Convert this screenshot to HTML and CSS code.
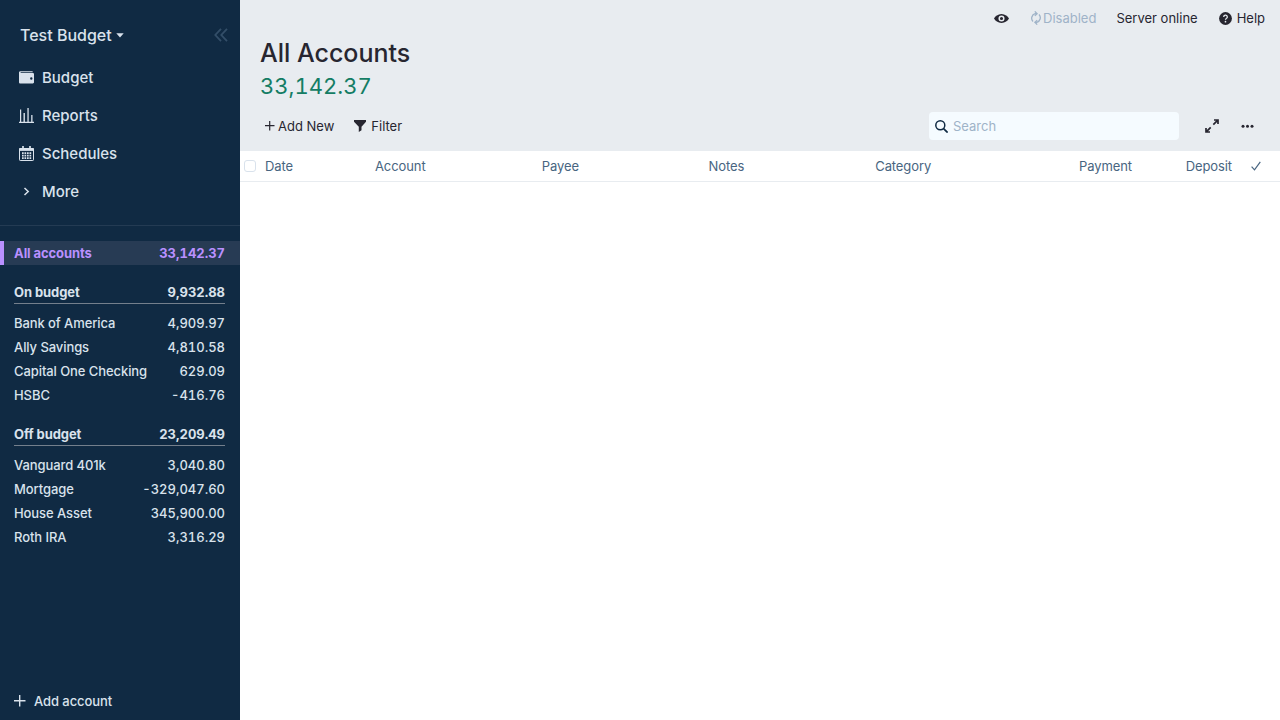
FILE: index.html
```html
<!DOCTYPE html>
<html lang="en">
<head>
    <meta charset="UTF-8">
    <meta name="viewport" content="width=device-width, initial-scale=1.0">
    <title>All Accounts</title>
    <link rel="stylesheet" href="styles.css">
</head>
<body>

<div class="app">
    <aside class="sidebar">
        <div class="budget-name">
            <span>Test Budget</span>
            <svg class="caret" width="8" height="5" viewBox="0 0 8 5"><path d="M.3.3h7.400L4 4.600z" fill="currentColor"/></svg>
            <svg class="collapse" width="14" height="14" viewBox="0 0 14 14" fill="none" stroke="currentColor" stroke-width="1.800"><path d="M7 .8L1.300 7 7 13.200M13 .8L7.300 7l5.700 6.200"/></svg>
        </div>

        <nav class="nav">
            <a class="nav-item">
                <svg width="15" height="15" viewBox="0 0 15 15" fill="currentColor"><path d="M1.4 1.2h11.8c.4 0 .6.3.6.6v.5H1.9c-.5 0-.5.7 0 .7h11.9c.7 0 1.2.5 1.2 1.2v8.1c0 .7-.5 1.2-1.2 1.2H1.4C.6 13.5 0 12.9 0 12.2V2.6c0-.8.6-1.4 1.4-1.4zM12.300 7.300a1.200 1.200 0 1 0 0 2.400 1.200 1.200 0 0 0 0-2.400z"/></svg>
                Budget
            </a>
            <a class="nav-item">
                <svg width="15" height="15" viewBox="0 0 15 15" fill="currentColor"><path d="M0 13.800h15V15H0zM1 1.500h1.200V14H1zM4.500 5h1.400v9H4.500zM8.400 0h1.300v14H8.400zM12.200 7h1.300v7h-1.300z"/></svg>
                Reports
            </a>
            <a class="nav-item">
                <svg width="15" height="15" viewBox="0 0 15 15" fill="none" stroke="currentColor"><path d="M.5 2.500h14v11.300a.7.7 0 0 1-.7.7H1.200a.7.7 0 0 1-.7-.7z"/><path d="M.5 3.600h14" stroke-width="2.600"/><path d="M4 0v3M11 0v3" stroke-width="1.700"/><path d="M3 7.200h9.300M3 9.700h9.300M3 12.100h9.300" stroke-width="1.700" stroke-dasharray="1.700 .8"/></svg>
                Schedules
            </a>
            <a class="nav-item">
                <svg width="15" height="15" viewBox="0 0 15 15" fill="none" stroke="currentColor" stroke-width="1.500"><path d="M5.500 4l3.700 3.500L5.500 11"/></svg>
                More
            </a>
        </nav>

        <div class="accounts">
            <div class="account selected"><span>All accounts</span><span class="amount">33,142.37</span></div>

            <div class="account group"><span>On budget</span><span class="amount">9,932.88</span></div>
            <div class="account"><span>Bank of America</span><span class="amount">4,909.97</span></div>
            <div class="account"><span>Ally Savings</span><span class="amount">4,810.58</span></div>
            <div class="account"><span>Capital One Checking</span><span class="amount">629.09</span></div>
            <div class="account"><span>HSBC</span><span class="amount">-416.76</span></div>

            <div class="account group"><span>Off budget</span><span class="amount">23,209.49</span></div>
            <div class="account"><span>Vanguard 401k</span><span class="amount">3,040.80</span></div>
            <div class="account"><span>Mortgage</span><span class="amount">-329,047.60</span></div>
            <div class="account"><span>House Asset</span><span class="amount">345,900.00</span></div>
            <div class="account"><span>Roth IRA</span><span class="amount">3,316.29</span></div>
        </div>

        <div class="add-account">
            <svg width="12" height="12" viewBox="0 0 12 12" stroke="currentColor" stroke-width="1.400"><path d="M5.700 0v11.500M0 5.700h11.500"/></svg>
            Add account
        </div>
    </aside>

    <main class="content">
        <div class="titlebar">
            <svg class="eye" width="15" height="15" viewBox="0 0 15 15"><path d="M7.500 3C3.900 3 1.300 5.300 0 7.500 1.300 9.700 3.900 12 7.500 12s6.200-2.300 7.500-4.500C13.700 5.300 11.100 3 7.500 3z" fill="currentColor"/><circle cx="7.500" cy="7.500" r="2.300" fill="none" stroke="#e8ecf0" stroke-width="1.500"/></svg>
            <span class="sync">
                <svg width="13" height="14" viewBox="0 0 13 14" fill="none" stroke="currentColor" stroke-width="1.300"><path d="M3 10.500A4.700 4.700 0 0 1 5.200 2.700H7M9 3.500a4.700 4.700 0 0 1-2.200 7.800H5M4.800.4l2.300 2.300-2.300 2.200M7.200 9.100l-2.300 2.200 2.300 2.300"/></svg>
                Disabled
            </span>
            <span class="server">Server online</span>
            <span class="help">
                <svg width="13" height="13" viewBox="0 0 13 13"><circle cx="6.500" cy="6.500" r="6.400" fill="currentColor"/><path d="M4.700 5a1.800 1.800 0 1 1 2.700 1.500c-.6.300-.9.600-.9 1.300" fill="none" stroke="#e8ecf0" stroke-width="1.300"/><circle cx="6.500" cy="9.700" r=".85" fill="#e8ecf0"/></svg>
                Help
            </span>
        </div>

        <header class="account-header">
            <h1>All Accounts</h1>
            <div class="balance">33,142.37</div>
        </header>

        <div class="toolbar">
            <span class="tool add-new">
                <svg width="10" height="10" viewBox="0 0 10 10" stroke="currentColor" stroke-width="1.200"><path d="M4.700 0v9.500M0 4.700h9.500"/></svg>
                Add New
            </span>
            <span class="tool filter">
                <svg width="12" height="12" viewBox="0 0 12 12" fill="currentColor"><path d="M0 0h12v1.700L7.500 6.800v3.500L4.800 12V6.800L0 1.700z"/></svg>
                Filter
            </span>
            <label class="search">
                <svg width="13" height="13" viewBox="0 0 13 13" fill="none" stroke="currentColor" stroke-width="1.500"><circle cx="5.300" cy="5.300" r="4.500"/><path d="M8.600 8.600l4 4" stroke-width="1.700"/></svg>
                <input type="text" placeholder="Search">
            </label>
            <svg class="expand" width="14" height="14" viewBox="0 0 14 14" fill="none" stroke="currentColor" stroke-width="1.700"><path d="M9 1h4v4M5 13H1V9M12.800 1.200L8.300 5.700M1.200 12.800l4.500-4.500"/></svg>
            <svg class="dots" width="13" height="4" viewBox="0 0 13 4" fill="currentColor"><circle cx="2" cy="2.200" r="1.500"/><circle cx="6.500" cy="2.200" r="1.500"/><circle cx="11" cy="2.200" r="1.500"/></svg>
        </div>

        <div class="table-header">
            <span class="checkbox"></span>
            <span>Date</span>
            <span>Account</span>
            <span>Payee</span>
            <span>Notes</span>
            <span>Category</span>
            <span class="right">Payment</span>
            <span class="right">Deposit</span>
            <svg class="cleared" width="10" height="10" viewBox="0 0 10 10" fill="none" stroke="currentColor" stroke-width="1.200"><path d="M.6 5.700l2.900 3.200L9.300.8"/></svg>
        </div>
    </main>
</div>

</body>
</html>
```
FILE: styles.css
```css
* {
    box-sizing: border-box;
}

body {
    margin: 0;
    font-family: Inter, sans-serif;
    font-size: 13px;
    color: #272630;
}

svg {
    display: block;
    flex-shrink: 0;
}

.app {
    display: flex;
    height: 100vh;
}

/* Sidebar */
.sidebar {
    display: flex;
    flex-direction: column;
    width: 240px;
    background-color: #102a43;
    color: #d9e2ec;
}

.budget-name {
    display: flex;
    align-items: center;
    height: 34px;
    margin-top: 18px;
    padding: 0 12px 0 20px;
    font-size: 16px;
    font-weight: 500;
}

.caret {
    margin-left: 4px;
}

.collapse {
    margin-left: auto;
    color: #334e68;
}

.nav {
    margin-top: 6px;
    padding-bottom: 15px;
    border-bottom: 1px solid #243b53;
}

.nav-item {
    display: flex;
    align-items: center;
    gap: 8px;
    height: 38px;
    padding-left: 19px;
    font-size: 15px;
    font-weight: 500;
}

.accounts {
    margin-top: 15px;
}

.account {
    display: flex;
    justify-content: space-between;
    align-items: center;
    height: 24px;
    padding: 0 15px 0 14px;
    font-weight: 500;
    letter-spacing: -0.08px;
}

.amount,
.balance {
    font-feature-settings: "tnum";
    letter-spacing: 0;
}

.account.selected {
    padding-left: 10px;
    border-left: 4px solid #b990ff;
    background-color: #273b54;
    color: #b990ff;
    font-weight: 700;
}

.account.group {
    height: 23px;
    margin: 16px 15px 7px 14px;
    padding: 0;
    border-bottom: 1px solid #747f8c;
    font-weight: 700;
}

.add-account {
    display: flex;
    align-items: center;
    gap: 8px;
    height: 16px;
    margin-top: auto;
    margin-bottom: 11px;
    padding-left: 14px;
    font-weight: 500;
    letter-spacing: -0.08px;
}

/* Main area */
.content {
    flex: 1;
    background-color: #fff;
}

.titlebar {
    display: flex;
    align-items: center;
    height: 36px;
    padding-right: 15px;
    justify-content: flex-end;
    background-color: #e8ecf0;
}

.sync,
.help,
.tool {
    display: flex;
    align-items: center;
}

.sync {
    margin-left: 21px;
    color: #9fb3c8;
}

.server {
    margin-left: 20px;
}

.help {
    gap: 5px;
    margin-left: 21px;
}

.account-header {
    height: 65px;
    padding-left: 20px;
    background-color: #e8ecf0;
}

h1 {
    margin: 0;
    font-size: 25px;
    font-weight: 500;
    line-height: 34px;
}

.balance {
    color: #147d64;
    font-size: 22px;
    line-height: 32px;
}

.toolbar {
    display: flex;
    align-items: center;
    height: 50px;
    padding: 0 26px 0 25px;
    background-color: #e8ecf0;
}

.tool {
    gap: 3px;
}

.filter {
    gap: 5px;
    margin-left: 20px;
}

.search {
    display: flex;
    align-items: center;
    gap: 5px;
    width: 250px;
    height: 28px;
    margin-left: auto;
    padding-left: 6px;
    border-radius: 4px;
    background-color: #f5fbff;
    color: #102a43;
}

.search input {
    flex: 1;
    min-width: 0;
    padding: 0;
    border: 0;
    outline: none;
    background: none;
    font: inherit;
}

.search input::placeholder {
    color: #9fb3c8;
}

.expand {
    margin-left: 26px;
}

.dots {
    margin-left: 22px;
}

.table-header {
    display: grid;
    grid-template-columns: 20px 110px repeat(4, 166.75px) 90px 100px 1fr;
    align-items: center;
    height: 31px;
    padding-left: 5px;
    border-bottom: 1px solid #e8ecf0;
    color: #486581;
    letter-spacing: -0.1px;
}

.checkbox {
    width: 12px;
    height: 12px;
    margin-left: -1px;
    border: 1px solid #d9e2ec;
    border-radius: 3px;
}

.right {
    text-align: right;
}

.cleared {
    margin-left: 19px;
}
```
